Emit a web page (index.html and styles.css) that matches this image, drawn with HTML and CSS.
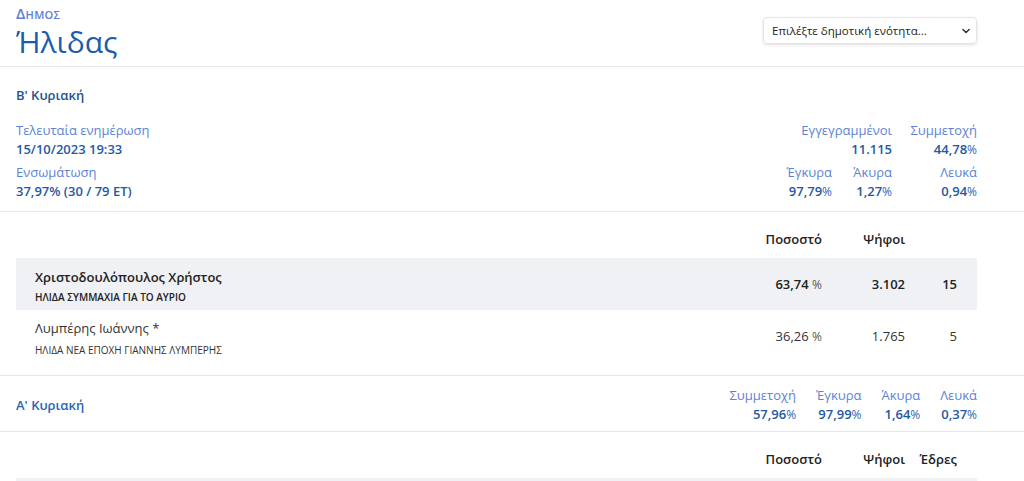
FILE: index.html
```html
<!DOCTYPE html>
<html lang="el">
<head>
    <meta charset="UTF-8">
    <meta name="viewport" content="width=device-width, initial-scale=1.0">
    <title>Δήμος Ήλιδας</title>
    <link rel="stylesheet" href="styles.css">
</head>
<body>

    <header class="top">
        <div class="title">
            <div class="kicker">Δημος</div>
            <h1>Ήλιδας</h1>
        </div>
        <div class="picker">
            <span>Επιλέξτε δημοτική ενότητα...</span>
            <svg width="10" height="10" viewBox="0 0 16 16"><path d="M3 5.5l5 5 5-5" fill="none" stroke="#333" stroke-width="2.4" stroke-linecap="round" stroke-linejoin="round"/></svg>
        </div>
    </header>

    <!-- Second round -->
    <section class="round">
        <h2 class="round-title">Β' Κυριακή</h2>
        <div class="summary">
            <div class="meta">
                <div class="stat">
                    <span class="label">Τελευταία ενημέρωση</span>
                    <strong>15/10/2023 19:33</strong>
                </div>
                <div class="stat">
                    <span class="label">Ενσωμάτωση</span>
                    <strong>37,97% (30 / 79 ΕΤ)</strong>
                </div>
            </div>
            <div class="grid-stats">
                <div class="stat right wide">
                    <span class="label">Εγγεγραμμένοι</span>
                    <strong>11.115</strong>
                </div>
                <div class="stat right">
                    <span class="label">Συμμετοχή</span>
                    <strong>44,78<small>%</small></strong>
                </div>
                <div class="stat right">
                    <span class="label">Έγκυρα</span>
                    <strong>97,79<small>%</small></strong>
                </div>
                <div class="stat right">
                    <span class="label">Άκυρα</span>
                    <strong>1,27<small>%</small></strong>
                </div>
                <div class="stat right">
                    <span class="label">Λευκά</span>
                    <strong>0,94<small>%</small></strong>
                </div>
            </div>
        </div>
    </section>

    <section class="results">
        <div class="row head">
            <div></div>
            <div class="num">Ποσοστό</div>
            <div class="num">Ψήφοι</div>
            <div class="num"></div>
        </div>
        <div class="row winner">
            <div class="cand">
                <div class="name">Χριστοδουλόπουλος Χρήστος</div>
                <div class="party">ΗΛΙΔΑ ΣΥΜΜΑΧΙΑ ΓΙΑ ΤΟ ΑΥΡΙΟ</div>
            </div>
            <div class="num">63,74 <small>%</small></div>
            <div class="num">3.102</div>
            <div class="num">15</div>
        </div>
        <div class="row">
            <div class="cand">
                <div class="name">Λυμπέρης Ιωάννης *</div>
                <div class="party">ΗΛΙΔΑ ΝΕΑ ΕΠΟΧΗ ΓΙΑΝΝΗΣ ΛΥΜΠΕΡΗΣ</div>
            </div>
            <div class="num">36,26 <small>%</small></div>
            <div class="num">1.765</div>
            <div class="num">5</div>
        </div>
    </section>

    <!-- First round -->
    <section class="round first">
        <h2 class="round-title">Α' Κυριακή</h2>
        <div class="flat-stats">
            <div class="stat right">
                <span class="label">Συμμετοχή</span>
                <strong>57,96<small>%</small></strong>
            </div>
            <div class="stat right">
                <span class="label">Έγκυρα</span>
                <strong>97,99<small>%</small></strong>
            </div>
            <div class="stat right">
                <span class="label">Άκυρα</span>
                <strong>1,64<small>%</small></strong>
            </div>
            <div class="stat right">
                <span class="label">Λευκά</span>
                <strong>0,37<small>%</small></strong>
            </div>
        </div>
    </section>

    <section class="results">
        <div class="row head">
            <div></div>
            <div class="num">Ποσοστό</div>
            <div class="num">Ψήφοι</div>
            <div class="num">Έδρες</div>
        </div>
        <div class="row winner">
            <div class="cand">
                <div class="name">Χριστοδουλόπουλος Χρήστος</div>
                <div class="party">ΗΛΙΔΑ ΣΥΜΜΑΧΙΑ ΓΙΑ ΤΟ ΑΥΡΙΟ</div>
            </div>
            <div class="num">43,12 <small>%</small></div>
            <div class="num">2.710</div>
            <div class="num">15</div>
        </div>
    </section>

</body>
</html>
```

FILE: styles.css
```css
* {
    margin: 0;
    padding: 0;
    box-sizing: border-box;
}

body {
    font-family: 'Open Sans', 'Noto Sans', sans-serif;
    font-size: 13px;
    color: #222;
    background: #fff;
}

/* Header */
.top {
    display: flex;
    justify-content: space-between;
    align-items: flex-start;
    height: 67px;
    padding: 0 47px 0 16px;
    border-bottom: 1px solid #e6e6e6;
}

.kicker {
    font-variant: small-caps;
    font-weight: 600;
    font-size: 15px;
    letter-spacing: 0.3px;
    line-height: 16px;
    color: #5b80d3;
    padding-top: 5px;
}

h1 {
    font-size: 30px;
    font-weight: 400;
    line-height: 42px;
    color: #1b5cab;
}

.picker {
    margin-top: 17px;
    width: 214px;
    height: 27px;
    display: flex;
    align-items: center;
    justify-content: space-between;
    padding: 0 5px 0 8px;
    font-size: 11.5px;
    color: #222;
    border: 1px solid #e1e4e8;
    border-radius: 4px;
    box-shadow: 0 1px 3px rgba(0, 0, 0, 0.12);
}

/* Round summaries */
.round {
    padding: 18px 47px 10px 16px;
    border-bottom: 1px solid #e6e6e6;
}

.round-title {
    font-size: 13px;
    font-weight: 600;
    line-height: 20px;
    color: #24548f;
    margin-bottom: 16px;
}

.summary {
    display: flex;
    justify-content: space-between;
}

.meta, .grid-stats {
    display: grid;
    row-gap: 4px;
}

.grid-stats {
    grid-template-columns: 46px 40px 65px;
    column-gap: 20px;
}

.grid-stats .wide {
    grid-column: 1 / span 2;
}

.stat {
    display: flex;
    flex-direction: column;
    line-height: 19px;
}

.stat.right {
    align-items: flex-end;
}

.label {
    color: #5b84d4;
}

.stat strong {
    font-weight: 600;
    color: #1e59a4;
}

.stat small {
    font-size: 12px;
    font-weight: 400;
    color: #2d66b3;
}

.round.first {
    display: flex;
    justify-content: space-between;
    align-items: center;
    height: 56px;
    padding: 2px 47px 0 16px;
}

.round.first .round-title {
    margin: 0;
    color: #2a66b2;
}

.flat-stats {
    display: flex;
    gap: 20px;
}

/* Candidate tables */
.results {
    padding: 14px 47px 13px 16px;
    border-bottom: 1px solid #e6e6e6;
}

.row {
    display: grid;
    grid-template-columns: 1fr 120px 83px 52px;
    align-items: center;
    height: 52px;
    padding: 0 20px 0 19px;
    color: #333;
}

.row.head {
    height: 32px;
    align-items: start;
    padding-top: 4px;
    font-weight: 600;
    color: #222;
}

.row.winner {
    background: #f0f1f4;
    font-weight: 600;
    color: #222;
}

.num {
    text-align: right;
}

.num small {
    font-size: 12px;
    font-weight: 400;
    color: #555;
}

.cand {
    padding-top: 3px;
}

.name {
    font-size: 13px;
    line-height: 18px;
}

.party {
    font-size: 10px;
    line-height: 14px;
    margin-top: 4px;
}

.row:not(.winner) .party {
    margin-top: 6px;
}
```
